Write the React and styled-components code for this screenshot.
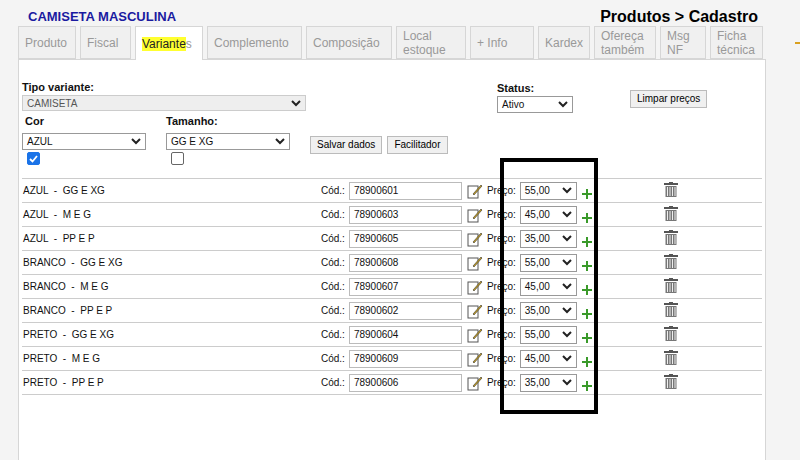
import React from "react";
import styled, { createGlobalStyle } from "styled-components";

const G = createGlobalStyle`
  body{margin:0;background:#f4f4f4;font-family:Arial,"Liberation Sans",sans-serif;}
`;
const Page = styled.div`position:relative;width:800px;height:460px;overflow:hidden;padding:0 0 0 18px;box-sizing:border-box;`;
const Header = styled.div`display:flex;justify-content:space-between;align-items:flex-end;height:26px;width:730px;padding-left:10px;`;
const Title = styled.div`color:#1a1aa0;font-weight:bold;font-size:13px;padding-bottom:2px;`;
const Crumb = styled.div`font-weight:bold;font-size:16px;color:#000;`;
const Tabs = styled.div`display:flex;gap:4px;height:33px;align-items:flex-end;`;
const Tab = styled.div`
  box-sizing:border-box;width:${p=>p.w}px;height:${p=>p.active?34:33}px;
  background:${p=>p.active?"#fff":"#f0f0f0"};border:1px solid #d6d6d6;border-bottom:${p=>p.active?"none":"1px solid #d6d6d6"};
  color:#999;font-size:12px;display:flex;align-items:center;padding:0 6px;line-height:14px;margin-bottom:${p=>p.active?-1:0}px;
  position:relative;z-index:1;
`;
const Hl = styled.span`background:#ffff30;color:#222;`;
const Panel = styled.div`background:#fff;border:1px solid #d6d6d6;width:748px;height:410px;box-sizing:border-box;padding:21px 0 0 3px;`;
const Label = styled.div`font-weight:bold;font-size:11px;color:#111;margin-bottom:2px;`;
const Sel = styled.div`
  box-sizing:border-box;width:${p=>p.w}px;height:${p=>p.h||16}px;border:1px solid ${p=>p.grey?"#ccc":"#999"};
  background:${p=>p.grey?"#eee":"#fff"};font-size:10px;color:${p=>p.grey?"#555":"#111"};
  display:flex;align-items:center;justify-content:space-between;padding:0 4px;
`;
const Chev = () => <svg width="10" height="7" viewBox="0 0 10 7"><path d="M1 1l4 4 4-4" fill="none" stroke="#222" strokeWidth="2"/></svg>;
const Row1 = styled.div`display:flex;`;
const Btn = styled.div`font-size:10px;background:#f0f0f0;border:1px solid #bbb;padding:2px 6px;height:12px;line-height:12px;`;
const Check = styled.div`width:11px;height:11px;border-radius:2px;margin:2px 0 0 5px;
  background:${p=>p.on?"#1a73e8":"#fff"};border:1px solid ${p=>p.on?"#1a73e8":"#666"};display:flex;align-items:center;justify-content:center;`;
const List = styled.div`margin-top:13px;width:740px;border-top:1px solid #ccc;`;
const Row = styled.div`display:flex;align-items:center;height:23px;border-bottom:1px solid #ccc;font-size:10px;color:#111;`;
const Name = styled.div`width:298px;padding-left:1px;white-space:pre;`;
const Inp = styled.div`box-sizing:border-box;width:113px;height:18px;border:1px solid #bbb;padding:0 4px;display:flex;align-items:center;margin-left:4px;`;
const Box = styled.div`position:absolute;left:500px;top:158px;width:98px;height:256px;box-sizing:border-box;border:4px solid #000;`;
const Mark = styled.div`position:absolute;left:795px;top:42px;width:5px;height:2px;background:#d9a020;`;

const Edit = () => <svg width="16" height="16" viewBox="0 0 16 16" style={{margin:"0 4px 0 5px"}}>
  <rect x="1" y="3" width="10" height="12" fill="#fff" stroke="#555"/><path d="M6 11l8-9 1 1-8 9z" fill="#c8a020" stroke="#333" strokeWidth=".6"/></svg>;
const Plus = () => <svg width="10" height="10" viewBox="0 0 10 10" style={{margin:"6px 0 0 5px"}}><path d="M4 0h2v4h4v2H6v4H4V6H0V4h4z" fill="#3a9a2a"/></svg>;
const Trash = () => <svg width="14" height="15" viewBox="0 0 14 15"><rect x="0" y="1" width="14" height="2" fill="#555"/><rect x="5" y="0" width="4" height="2" fill="#555"/>
  <rect x="1.5" y="4" width="11" height="11" fill="#777"/>{[3,5.5,8,10.5].map(x=><rect key={x} x={x} y="5" width="1" height="9" fill="#eee"/>)}</svg>;

const tabs=[["Produto",58],["Fiscal",51],["Variantes",68,1],["Complemento",95],["Composição",86],["Local estoque",70],["+ Info",64],["Kardex",52],["Ofereça também",62],["Msg NF",46],["Ficha técnica",53]];
const rows=[["AZUL  -  GG E XG","78900601","55,00"],["AZUL  -  M E G","78900603","45,00"],["AZUL  -  PP E P","78900605","35,00"],["BRANCO  -  GG E XG","78900608","55,00"],["BRANCO  -  M E G","78900607","45,00"],["BRANCO  -  PP E P","78900602","35,00"],["PRETO  -  GG E XG","78900604","55,00"],["PRETO  -  M E G","78900609","45,00"],["PRETO  -  PP E P","78900606","35,00"]];

export default function App(){
  return <Page><G/>
    <Header><Title>CAMISETA MASCULINA</Title><Crumb>Produtos &gt; Cadastro</Crumb></Header>
    <Tabs>{tabs.map(([t,w,a])=><Tab key={t} w={w} active={a}>{a?<><Hl>Variante</Hl>s</>:t}</Tab>)}</Tabs>
    <Panel>
      <Row1>
        <div><Label>Tipo variante:</Label><Sel w={284} grey>CAMISETA<Chev/></Sel></div>
        <div style={{marginLeft:191,marginTop:1}}><Label>Status:</Label><Sel w={76} h={17}>Ativo<Chev/></Sel></div>
        <div style={{marginLeft:57,marginTop:9}}><Btn>Limpar preços</Btn></div>
      </Row1>
      <Row1 style={{marginTop:2}}>
        <div><Label style={{marginLeft:3,marginBottom:6}}>Cor</Label><Sel w={124} h={17}>AZUL<Chev/></Sel>
          <Check on><svg width="9" height="8" viewBox="0 0 9 8"><path d="M1 4l2.5 2.5L8 1" fill="none" stroke="#fff" strokeWidth="1.8"/></svg></Check></div>
        <div style={{marginLeft:20}}><Label style={{marginBottom:6}}>Tamanho:</Label><Sel w={124} h={17}>GG E XG<Chev/></Sel><Check/></div>
        <div style={{marginLeft:20,marginTop:21,display:"flex",gap:5,height:17}}><Btn>Salvar dados</Btn><Btn>Facilitador</Btn></div>
      </Row1>
      <List>{rows.map(([n,c,p])=><Row key={c}>
        <Name>{n}</Name><span>Cód.:</span><Inp>{c}</Inp><Edit/><span>Preço:</span>
        <Sel w={57} h={18} style={{marginLeft:4}}>{p}<Chev/></Sel><Plus/>
        <div style={{marginLeft:72}}><Trash/></div>
      </Row>)}</List>
    </Panel>
    <Box/><Mark/>
  </Page>;
}
